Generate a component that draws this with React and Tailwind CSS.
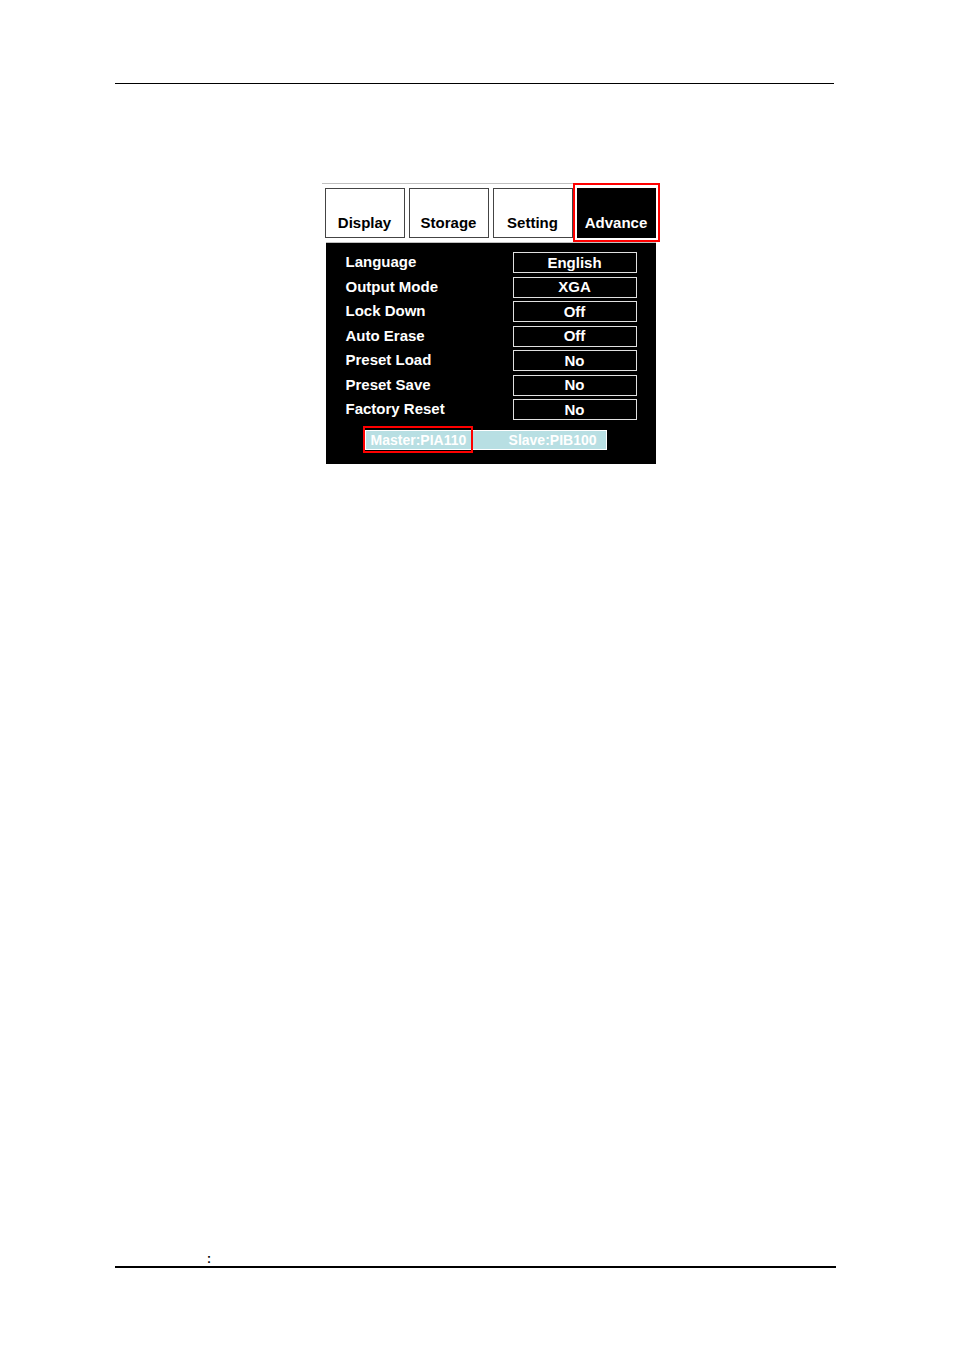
import React, { useState } from 'react';
import clsx from 'clsx';

const TABS = ['Display', 'Storage', 'Setting', 'Advance'];

const SETTINGS = [
  { id: 'language', label: 'Language', options: ['English', 'Deutsch'] },
  { id: 'output-mode', label: 'Output Mode', options: ['XGA', 'SXGA'] },
  { id: 'lock-down', label: 'Lock Down', options: ['Off', 'On'] },
  { id: 'auto-erase', label: 'Auto Erase', options: ['Off', 'On'] },
  { id: 'preset-load', label: 'Preset Load', options: ['No', 'Yes'] },
  { id: 'preset-save', label: 'Preset Save', options: ['No', 'Yes'] },
  { id: 'factory-reset', label: 'Factory Reset', options: ['No', 'Yes'] },
];

function Tab({ name, active, onClick }) {
  return (
    <button
      type="button"
      onClick={onClick}
      className={clsx(
        'flex h-[50px] min-w-0 flex-1 items-end justify-center border pb-1 leading-5',
        active ? 'border-black bg-black text-white' : 'border-[#444444] bg-white text-black'
      )}
    >
      {name}
    </button>
  );
}

function SettingRow({ id, label, options }) {
  return (
    <div className="flex h-[21px] items-center justify-between">
      <label htmlFor={id}>{label}</label>
      <select
        id={id}
        className="h-full w-[124px] appearance-none border border-[#e0e0e0] bg-black text-center leading-[18px] text-white outline-none"
      >
        {options.map((option) => (
          <option key={option}>{option}</option>
        ))}
      </select>
    </div>
  );
}

function OsdMenu() {
  const [activeTab, setActiveTab] = useState('Advance');

  return (
    <section className="w-full max-w-[338px] text-[15px] font-bold">
      <div className="flex border-t border-[#c0c0c0]">
        <div className="flex flex-1 gap-1 pt-1 pl-[3px]">
          {TABS.slice(0, 3).map((name) => (
            <Tab key={name} name={name} active={activeTab === name} onClick={() => setActiveTab(name)} />
          ))}
        </div>
        <div className="-mt-px flex w-[87px] border-2 border-[#ff0000] px-0.5 pt-[3px] pb-0.5">
          <Tab name="Advance" active={activeTab === 'Advance'} onClick={() => setActiveTab('Advance')} />
        </div>
      </div>

      <div className="mr-1 ml-1 border-t border-[#c0c0c0] bg-black pb-[11px] text-white">
        <div className="flex h-[177px] flex-col justify-between pt-[9px] pr-[19px] pl-5">
          {SETTINGS.map((setting) => (
            <SettingRow key={setting.id} {...setting} />
          ))}
        </div>

        <div className="mt-1.5 mr-[49px] ml-[37px] flex items-center justify-between text-sm">
          <div className="flex h-[27px] w-[110px] flex-col justify-center border-2 border-[#ff0000]">
            <span className="h-5 border-y border-l border-white bg-[#b8dfe3] pl-[5px] leading-[18px] whitespace-nowrap">
              Master:PIA110
            </span>
          </div>
          <span className="h-5 flex-1 border-y border-r border-white bg-[#b8dfe3] pr-[9px] text-right leading-[18px]">
            Slave:PIB100
          </span>
        </div>
      </div>
    </section>
  );
}

export default function App() {
  return (
    <div className="flex min-h-screen flex-col bg-white pt-[83px] pr-[118px] pb-[82px] pl-[115px] font-['Liberation_Sans',sans-serif] text-black">
      <header className="mr-0.5 border-t border-black" />
      <main className="flex justify-center pt-[99px] pl-[30px]">
        <OsdMenu />
      </main>
      <footer className="mt-auto border-b-2 border-black pl-[92px] text-xs leading-[14px] font-bold">:</footer>
    </div>
  );
}
